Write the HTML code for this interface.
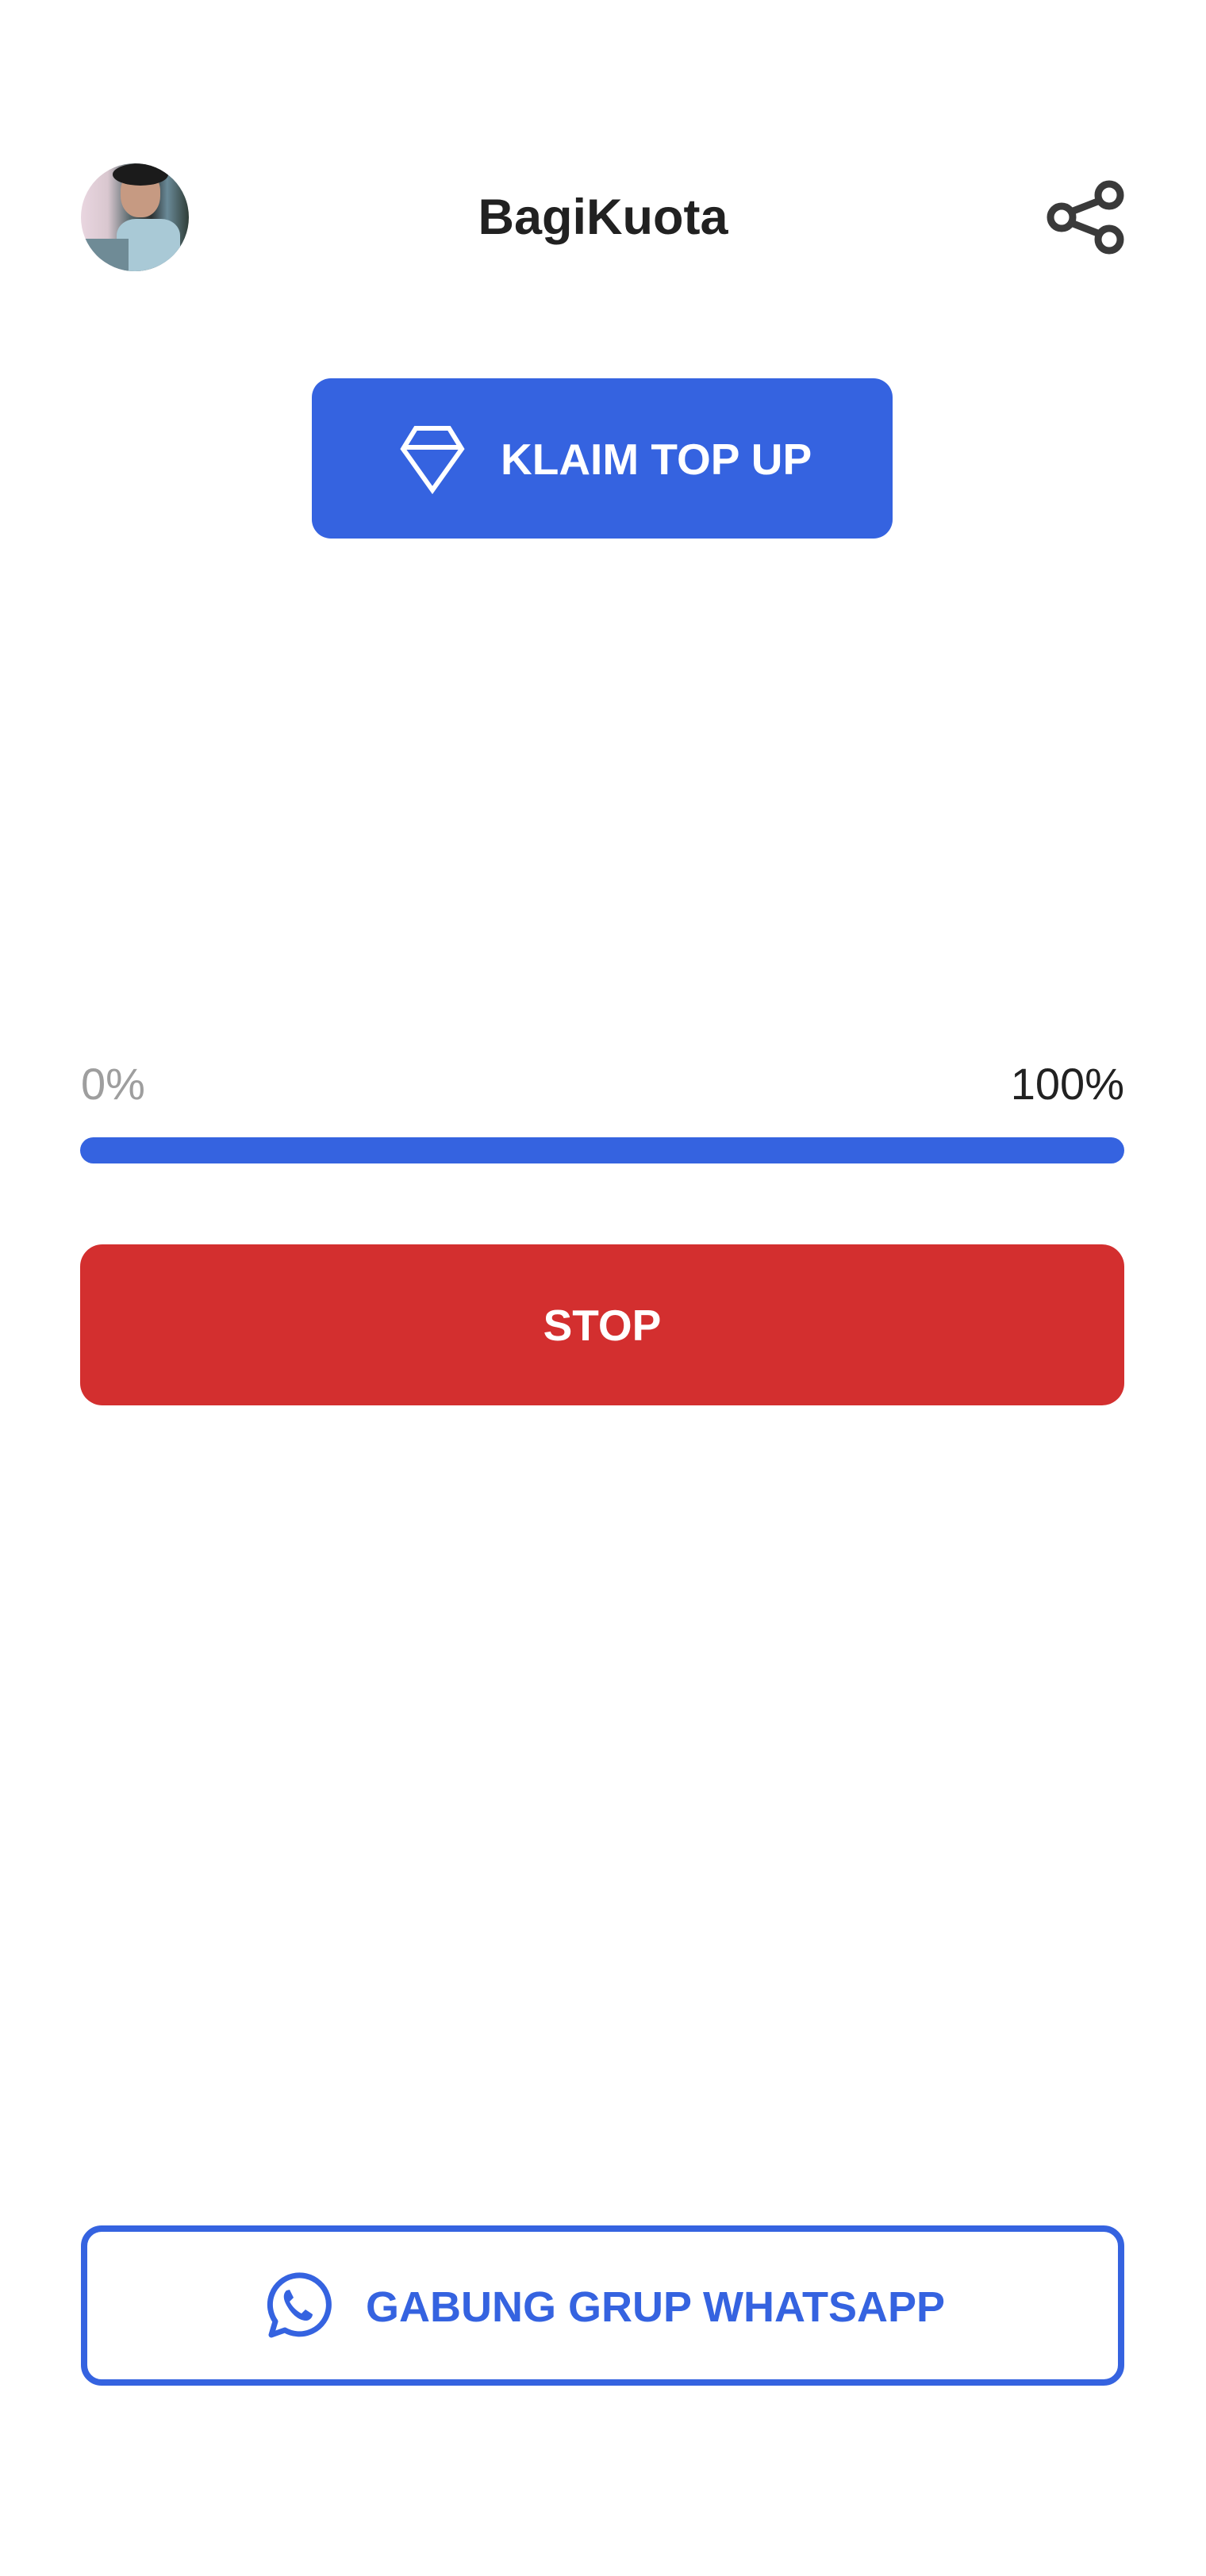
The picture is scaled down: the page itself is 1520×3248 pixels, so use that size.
<!DOCTYPE html>
<html><head><meta charset="utf-8"><style>
html,body{margin:0;padding:0;background:#fff;}
body{width:1520px;height:3248px;position:relative;font-family:"Liberation Sans",sans-serif;overflow:hidden;}
.a{position:absolute;}
</style></head><body>
<div class="a" style="left:102px;top:206px;width:136px;height:136px;border-radius:50%;overflow:hidden;background:linear-gradient(90deg,#e9d6e0 0%,#d9c7cf 25%,#5b6b6f 45%,#2b3030 65%,#6a8a98 80%,#2f3d37 100%);">
 <div class="a" style="left:50px;top:8px;width:50px;height:60px;border-radius:45%;background:#c69a82;"></div>
 <div class="a" style="left:40px;top:0;width:70px;height:28px;border-radius:50%;background:#1b1b1b;"></div>
 <div class="a" style="left:45px;top:70px;width:80px;height:70px;border-radius:30%;background:#a9c9d6;"></div>
 <div class="a" style="left:0;top:95px;width:60px;height:41px;background:#6f8b96;"></div>
</div>
<div class="a" style="left:0;width:1520px;top:238px;text-align:center;font-size:63px;font-weight:bold;color:#212121;line-height:72px;">BagiKuota</div>
<svg class="a" style="left:1314px;top:220px" width="108" height="108" viewBox="0 0 108 108">
 <g fill="none" stroke="#3a3a3a" stroke-width="9">
  <circle cx="84" cy="26" r="14"/><circle cx="24" cy="54" r="14"/><circle cx="84" cy="82" r="14"/>
  <line x1="36" y1="47" x2="72" y2="33"/><line x1="36" y1="61" x2="72" y2="75"/>
 </g></svg>
<div class="a" style="left:393px;top:477px;width:732px;height:202px;border-radius:24px;background:#3563E0;"></div>
<svg class="a" style="left:500px;top:534px" width="90" height="90" viewBox="0 0 90 90">
 <path d="M24 6 H66 L82 32 L45 84 L8 32 Z M9 30 H81" fill="none" stroke="#fff" stroke-width="6" stroke-linejoin="miter"/>
</svg>
<div class="a" style="left:631px;top:546px;font-size:55px;font-weight:bold;color:#fff;line-height:66px;white-space:nowrap;">KLAIM TOP UP</div>
<div class="a" style="left:102px;top:1335px;font-size:56px;color:#9e9e9e;line-height:64px;">0%</div>
<div class="a" style="right:103px;top:1335px;font-size:56px;color:#212121;line-height:64px;">100%</div>
<div class="a" style="left:101px;top:1434px;width:1316px;height:33px;border-radius:17px;background:#3563E0;"></div>
<div class="a" style="left:101px;top:1569px;width:1316px;height:203px;border-radius:28px;background:#D32F2F;"></div>
<div class="a" style="left:101px;width:1316px;top:1638px;text-align:center;font-size:55px;font-weight:bold;color:#fff;line-height:66px;">STOP</div>
<div class="a" style="left:102px;top:2806px;width:1299px;height:186px;border:8px solid #3563E0;border-radius:26px;"></div>
<svg class="a" style="left:332px;top:2864px" width="86" height="86" viewBox="0 0 86 86">
 <path d="M10 80 L15 63 A37 37 0 1 1 27 74 Z" fill="none" stroke="#3563E0" stroke-width="7" stroke-linejoin="round"/>
 <path d="M29 24 C25 28 24 34 30 44 C37 56 46 62 54 62 C58 62 62 58 62 54 L53 48 L48 53 C42 50 36 44 33 38 L38 33 L33 23 Z" fill="#3563E0"/>
</svg>
<div class="a" style="left:461px;top:2876px;font-size:54px;font-weight:bold;color:#3563E0;line-height:66px;white-space:nowrap;">GABUNG GRUP WHATSAPP</div>
</body></html>
